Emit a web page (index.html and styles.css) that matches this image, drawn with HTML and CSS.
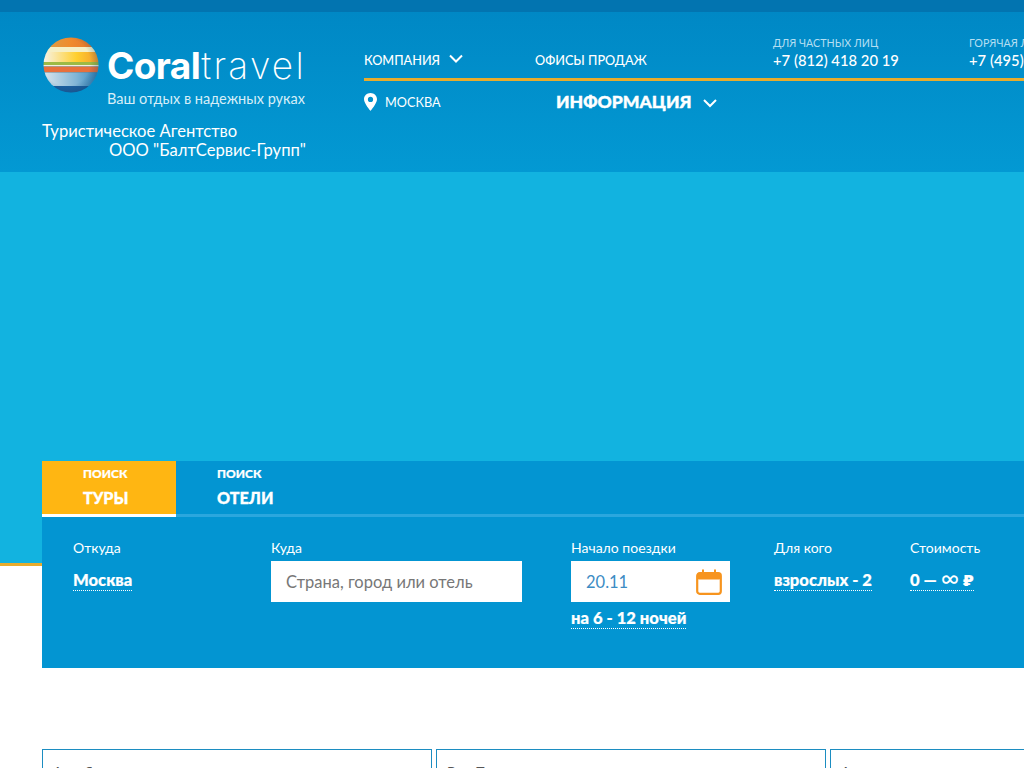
FILE: index.html
```html
<!DOCTYPE html>
<html lang="ru">
<head>
  <meta charset="UTF-8" />
  <title>Coral Travel</title>
  <link rel="stylesheet" href="styles.css">
</head>
<body>
  <header class="header">
    <div class="logo-col">
      <div class="logo">
        <svg class="globe" width="56" height="56" viewBox="0 0 56 56">
          <defs>
            <clipPath id="ball"><circle cx="28" cy="28" r="27.5" /></clipPath>
            <linearGradient id="band-top" x1="0" x2="1" y1="0" y2="0">
              <stop offset="0" stop-color="#d9a04a" />
              <stop offset="0.5" stop-color="#f08a2c" />
              <stop offset="1" stop-color="#e0702e" />
            </linearGradient>
            <linearGradient id="band-mid" x1="0" x2="1" y1="0" y2="0">
              <stop offset="0" stop-color="#f7f3e8" />
              <stop offset="0.6" stop-color="#ffcf2e" />
              <stop offset="1" stop-color="#f29a2a" />
            </linearGradient>
            <linearGradient id="band-low" x1="0" x2="1" y1="0" y2="0">
              <stop offset="0" stop-color="#dbe6ec" />
              <stop offset="0.6" stop-color="#7fb4d6" />
              <stop offset="1" stop-color="#2f86bd" />
            </linearGradient>
            <radialGradient id="shade" cx="0.42" cy="0.45" r="0.6">
              <stop offset="0.7" stop-color="#0b3a66" stop-opacity="0" />
              <stop offset="1" stop-color="#0b3a66" stop-opacity="0.3" />
            </radialGradient>
          </defs>
          <g clip-path="url(#ball)">
            <rect width="56" height="10" fill="url(#band-top)" />
            <rect y="10" width="56" height="5" fill="#f6efc4" />
            <rect y="15" width="56" height="10" fill="url(#band-mid)" />
            <rect y="25" width="56" height="3" fill="#9dba45" />
            <rect y="28" width="56" height="1.5" fill="#f2efe0" />
            <rect y="29.5" width="56" height="6" fill="#e8703c" />
            <rect y="35.5" width="56" height="13.5" fill="url(#band-low)" />
            <rect y="49" width="56" height="7" fill="#1c5f9e" />
            <circle cx="28" cy="28" r="28" fill="url(#shade)" />
          </g>
        </svg>
        <div class="logo-text">
          <div class="logo-name"><b>Coral</b><span class="logo-light">travel</span></div>
          <div class="logo-slogan">Ваш отдых в надежных руках</div>
        </div>
      </div>
      <div class="agency">
        <div>Туристическое Агентство</div>
        <div class="agency-name">ООО "БалтСервис-Групп"</div>
      </div>
    </div>

    <div class="nav-col">
      <div class="nav-top">
        <a class="nav-link nav-company">КОМПАНИЯ
          <svg width="14" height="10" viewBox="0 0 14 10"><path d="M1 1.5l6 6 6-6" fill="none" stroke="#fff" stroke-width="2" /></svg>
        </a>
        <a class="nav-link nav-offices">ОФИСЫ ПРОДАЖ</a>
        <div class="phone">
          <span class="phone-label">ДЛЯ ЧАСТНЫХ ЛИЦ</span>
          <span class="phone-num">+7 (812) 418 20 19</span>
        </div>
        <div class="phone">
          <span class="phone-label">ГОРЯЧАЯ ЛИНИЯ</span>
          <span class="phone-num">+7 (495) 785 55 55</span>
        </div>
      </div>
      <div class="nav-bottom">
        <div class="city">
          <svg width="13" height="18" viewBox="0 0 13 18"><path fill-rule="evenodd" fill="#fff" d="M6.5 0C2.9 0 0 2.8 0 6.3 0 10.5 6.5 18 6.5 18S13 10.5 13 6.3C13 2.8 10.1 0 6.5 0zm0 3.8a2.6 2.6 0 110 5.2 2.6 2.6 0 010-5.2z" /></svg>
          <span>МОСКВА</span>
        </div>
        <a class="info-link">ИНФОРМАЦИЯ
          <svg width="14" height="9" viewBox="0 0 14 9"><path d="M1 1l6 6 6-6" fill="none" stroke="#fff" stroke-width="2" /></svg>
        </a>
      </div>
    </div>
  </header>

  <section class="hero"></section>

  <section class="search">
    <div class="tabs">
      <div class="tab tab-active"><span class="tab-small">ПОИСК</span><span class="tab-big">ТУРЫ</span></div>
      <div class="tab"><span class="tab-small">ПОИСК</span><span class="tab-big">ОТЕЛИ</span></div>
    </div>
    <div class="fields">
      <div class="field field-from">
        <label>Откуда</label>
        <a class="dotted">Москва</a>
      </div>
      <div class="field field-to">
        <label>Куда</label>
        <div class="input input-to">Страна, город или отель</div>
      </div>
      <div class="field field-date">
        <label>Начало поездки</label>
        <div class="input input-date">
          <span>20.11</span>
          <svg width="26" height="26" viewBox="0 0 26 26">
            <rect x="1.2" y="4.2" width="23.6" height="20.6" rx="2.5" fill="#fff" stroke="#f7941e" stroke-width="2.2" />
            <rect x="1" y="4" width="24" height="6.5" rx="2" fill="#f7941e" />
            <rect x="6" y="0.5" width="2" height="6" fill="#f7941e" />
            <rect x="18" y="0.5" width="2" height="6" fill="#f7941e" />
          </svg>
        </div>
        <a class="dotted dotted-nights">на 6 - 12 ночей</a>
      </div>
      <div class="field field-who">
        <label>Для кого</label>
        <a class="dotted">взрослых - 2</a>
      </div>
      <div class="field field-cost">
        <label>Стоимость</label>
        <a class="dotted">0 — <span class="infinity">∞</span> ₽</a>
      </div>
    </div>
  </section>

  <section class="cards">
    <div class="card">Авиабилеты</div>
    <div class="card">Вид Тура</div>
    <div class="card">Акции и скидки</div>
  </section>
</body>
</html>
```

FILE: styles.css
```css
* {
  box-sizing: border-box;
}

html, body {
  height: 768px;
  overflow: hidden;
}

body {
  margin: 0;
  background: #fff;
  color: #fff;
  font-family: 'Lato', 'Noto Sans', sans-serif;
}

a {
  color: inherit;
}

.header {
  height: 172px;
  padding-left: 42px;
  display: flex;
  background: linear-gradient(#0088c5, #0399d3);
  border-top: 12px solid #0274b0;
}

.logo-col {
  width: 322px;
  flex: none;
}

.logo {
  display: flex;
  padding: 25px 0 0 1px;
  height: 110px;
}

.globe {
  flex: none;
}

.logo-text {
  margin-left: 8px;
}

.logo-name {
  font-family: 'Inter', sans-serif;
  font-size: 37px;
  font-weight: 300;
  letter-spacing: -0.6px;
  line-height: 44px;
  margin-top: 7px;
  white-space: nowrap;
}

.logo-name b {
  font-weight: 700;
}

.logo-light {
  font-weight: 200;
  letter-spacing: 2.3px;
  margin-left: 1px;
}

.logo-slogan {
  font-size: 14.5px;
  line-height: 18px;
  color: #d6eef8;
  margin-top: 2px;
  white-space: nowrap;
}

.agency {
  font-size: 16.6px;
  line-height: 19px;
  width: 264px;
}

.agency-name {
  text-align: right;
}

.nav-col {
  flex: 1;
  min-width: 0;
}

.nav-top {
  height: 69px;
  border-bottom: 3px solid #e8ac2d;
  display: flex;
  align-items: flex-end;
  white-space: nowrap;
  overflow: hidden;
}

.nav-link {
  flex: none;
  font-size: 12.7px;
  font-weight: 500;
  line-height: 16px;
  padding-bottom: 10px;
}

.nav-company {
  width: 171px;
}

.nav-company svg {
  margin-left: 6px;
  position: relative;
  top: -1px;
}

.nav-offices {
  width: 238px;
}

.phone {
  display: flex;
  flex-direction: column;
  padding-bottom: 8px;
  width: 196px;
  flex: none;
}

.phone-label {
  font-size: 10.7px;
  line-height: 14px;
  color: #b5dff2;
}

.phone-num {
  font-size: 14.8px;
  font-weight: 500;
  line-height: 20px;
}

.nav-bottom {
  display: flex;
  align-items: center;
  height: 41px;
}

.city {
  width: 192px;
  display: flex;
  align-items: center;
  gap: 8px;
  font-size: 12.7px;
}

.info-link {
  font-size: 17.6px;
  font-weight: 900;
  -webkit-text-stroke: 0.4px #fff;
  white-space: nowrap;
}

.info-link svg {
  margin-left: 7px;
}

.hero {
  height: 394px;
  background: #12b3e0;
  border-bottom: 3px solid #e8ac2d;
}

.search {
  margin: -105px 0 0 42px;
  height: 207px;
  background: #0395d2;
  position: relative;
}

.tabs {
  display: flex;
  height: 56px;
  border-bottom: 3px solid #2ba7de;
}

.tab {
  width: 134px;
  height: 56px;
  padding-left: 41px;
  display: flex;
  flex-direction: column;
}

.tab-active {
  background: #ffb612;
  border-bottom: 3px solid #fff;
}

.tab-small {
  font-size: 12px;
  font-weight: 900;
  -webkit-text-stroke: 0.2px #fff;
  line-height: 16px;
  margin-top: 5px;
}

.tab-big {
  font-size: 16.2px;
  font-weight: 900;
  -webkit-text-stroke: 0.3px #fff;
  line-height: 20px;
  margin-top: 6px;
}

.fields {
  display: flex;
  padding: 22px 0 0 31px;
}

.field {
  flex: none;
}

.field label {
  display: block;
  font-size: 14px;
  line-height: 18px;
  margin-bottom: 4px;
}

.field-from { width: 198px; }
.field-to { width: 300px; }
.field-date { width: 203px; }
.field-who { width: 136px; }
.field-cost { width: 100px; }

.dotted {
  display: inline-block;
  height: 20px;
  font-size: 16.6px;
  font-weight: 900;
  -webkit-text-stroke: 0.2px #fff;
  line-height: 19px;
  margin-top: 10px;
  border-bottom: 1px dotted #fff;
  white-space: nowrap;
}

.dotted-nights {
  margin-top: 7px;
}

.infinity {
  font-size: 25px;
  line-height: 0;
  font-weight: 400;
  -webkit-text-stroke: 0;
  vertical-align: -1px;
}

.input {
  background: #fff;
  height: 41px;
  display: flex;
  align-items: center;
  font-size: 16.5px;
}

.input-to {
  width: 251px;
  padding-left: 15px;
  color: #777;
}

.input-date {
  width: 159px;
  padding: 0 8px 0 15px;
  justify-content: space-between;
  color: #3c8cc4;
}

.cards {
  display: flex;
  gap: 4px;
  margin: 81px 0 0 42px;
  overflow: hidden;
}

.card {
  width: 390px;
  flex: none;
  height: 80px;
  padding: 13px 10px;
  border: 1px solid #1c8dc1;
  color: #555;
  font-size: 14px;
}
```
